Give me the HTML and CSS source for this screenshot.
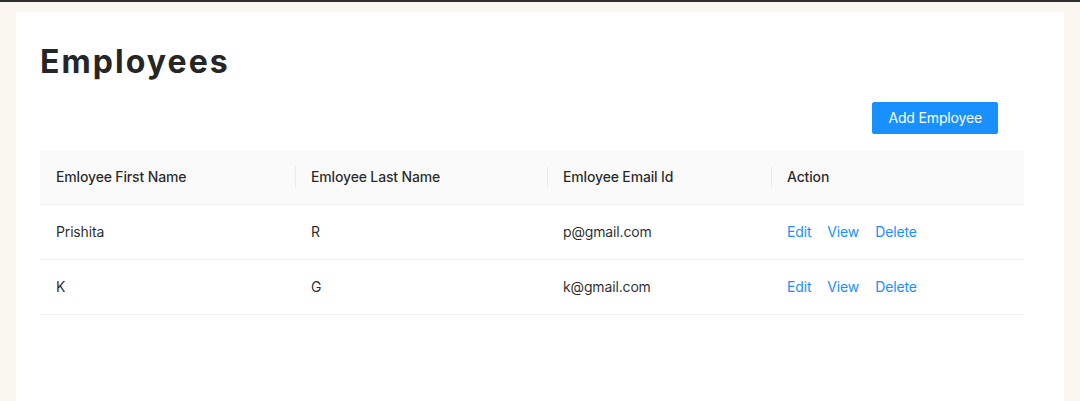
FILE: index.html
```html
<!DOCTYPE html>
<html>
<head>
<meta charset="utf-8">
<link rel="stylesheet" href="styles.css">
</head>
<body>
<div class="topbar"></div>
<div class="page">
  <div class="card">
    <h1 class="title">Employees</h1>
    <div class="toolbar">
      <button class="btn-primary">Add Employee</button>
    </div>
    <table class="table">
      <colgroup>
        <col class="c1"><col class="c2"><col class="c3"><col class="c4">
      </colgroup>
      <thead>
        <tr>
          <th>Emloyee First Name</th>
          <th class="sep">Emloyee Last Name</th>
          <th class="sep">Emloyee Email Id</th>
          <th class="sep">Action</th>
        </tr>
      </thead>
      <tbody>
        <tr>
          <td>Prishita</td>
          <td>R</td>
          <td>p@gmail.com</td>
          <td><div class="actions"><a>Edit</a><a>View</a><a>Delete</a></div></td>
        </tr>
        <tr>
          <td>K</td>
          <td>G</td>
          <td>k@gmail.com</td>
          <td><div class="actions"><a>Edit</a><a>View</a><a>Delete</a></div></td>
        </tr>
      </tbody>
    </table>
  </div>
</div>
</body>
</html>
```

FILE: styles.css
```css
* { box-sizing: border-box; }
html, body {
  margin: 0;
  padding: 0;
  background: #faf6f0;
  font-family: Inter, "Liberation Sans", sans-serif;
  color: rgba(0,0,0,0.85);
  font-size: 14px;
}
.topbar {
  height: 2px;
  background: #2f2f2f;
}
.page {
  padding: 10px 16px 0 16px;
}
.card {
  background: #ffffff;
  min-height: 420px;
  padding: 30px 40px 0 24px;
}
.title {
  margin: 0;
  font-size: 32px;
  font-weight: 700;
  letter-spacing: 2.05px;
  color: #262626;
  line-height: 39px;
}
.toolbar {
  display: flex;
  justify-content: flex-end;
  padding-right: 26px;
  margin-top: 21px;
}
.btn-primary {
  height: 32px;
  padding: 4px 15px;
  font-family: Inter, "Liberation Sans", sans-serif;
  font-size: 14px;
  letter-spacing: -0.15px;
  color: #ffffff;
  background: #1890ff;
  border: 1px solid #1890ff;
  border-radius: 2px;
  line-height: 22px;
}
.table {
  margin-top: 16px;
  width: 984px;
  border-collapse: collapse;
  table-layout: fixed;
  letter-spacing: -0.15px;
}
.c1 { width: 255px; }
.c2 { width: 252px; }
.c3 { width: 224px; }
.c4 { width: 253px; }
.table th {
  background: #fafafa;
  font-weight: 500;
  text-align: left;
  padding: 16px;
  line-height: 22px;
  border-bottom: 1px solid #f0f0f0;
  position: relative;
  color: rgba(0,0,0,0.85);
}
.table th.sep::before {
  content: "";
  position: absolute;
  left: 0;
  top: 50%;
  width: 1px;
  height: 22px;
  transform: translateY(-50%);
  background: rgba(0,0,0,0.06);
}
.table td {
  padding: 16px;
  line-height: 22px;
  border-bottom: 1px solid #f0f0f0;
}
.actions {
  display: flex;
  gap: 16px;
}
.actions a {
  color: #1890ff;
  cursor: pointer;
}
```
